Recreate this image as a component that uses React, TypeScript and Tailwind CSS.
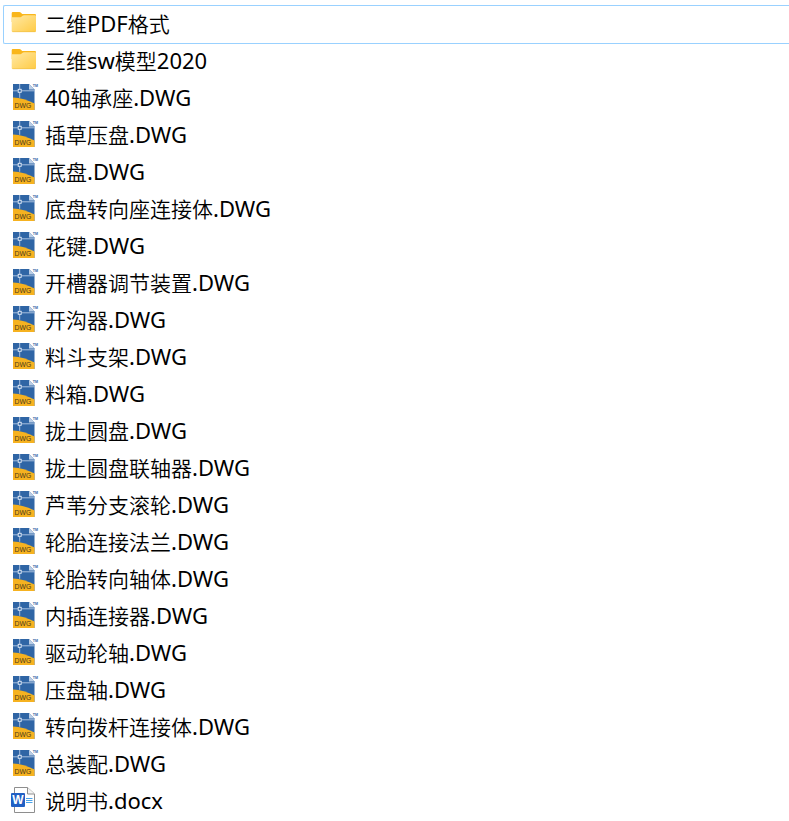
import React from 'react';

type FileKind = 'folder' | 'dwg' | 'docx';

interface FileItem {
    name: string;
    kind: FileKind;
    selected?: boolean;
}

const files: FileItem[] = [
    { name: '二维PDF格式', kind: 'folder', selected: true },
    { name: '三维sw模型2020', kind: 'folder' },
    { name: '40轴承座.DWG', kind: 'dwg' },
    { name: '插草压盘.DWG', kind: 'dwg' },
    { name: '底盘.DWG', kind: 'dwg' },
    { name: '底盘转向座连接体.DWG', kind: 'dwg' },
    { name: '花键.DWG', kind: 'dwg' },
    { name: '开槽器调节装置.DWG', kind: 'dwg' },
    { name: '开沟器.DWG', kind: 'dwg' },
    { name: '料斗支架.DWG', kind: 'dwg' },
    { name: '料箱.DWG', kind: 'dwg' },
    { name: '拢土圆盘.DWG', kind: 'dwg' },
    { name: '拢土圆盘联轴器.DWG', kind: 'dwg' },
    { name: '芦苇分支滚轮.DWG', kind: 'dwg' },
    { name: '轮胎连接法兰.DWG', kind: 'dwg' },
    { name: '轮胎转向轴体.DWG', kind: 'dwg' },
    { name: '内插连接器.DWG', kind: 'dwg' },
    { name: '驱动轮轴.DWG', kind: 'dwg' },
    { name: '压盘轴.DWG', kind: 'dwg' },
    { name: '转向拨杆连接体.DWG', kind: 'dwg' },
    { name: '总装配.DWG', kind: 'dwg' },
    { name: '说明书.docx', kind: 'docx' },
];

const iconClass = 'w-[28px] h-[29px] shrink-0';

const FolderIcon: React.FC = () => (
    <svg className={iconClass} viewBox="0 0 28 29" aria-hidden="true">
        <defs>
            <linearGradient id="folder-front" x1="0" y1="0" x2="1" y2="1">
                <stop offset="0" stopColor="#ffe9a6" />
                <stop offset="1" stopColor="#ffcb45" />
            </linearGradient>
        </defs>
        <path d="M0.7 3.2Q0.7 2 1.9 2H8.3Q9.1 2 9.7 2.6L11.2 4H24Q25 4 25 5V12H0.7Z" fill="#f9b61c" />
        <path d="M0.7 7.2H9.3Q10.1 7.2 10.7 6.6L11.6 5.8Q12.2 5.2 13 5.2H24Q25 5.2 25 6.2V21Q25 22 24 22H1.7Q0.7 22 0.7 21Z" fill="url(#folder-front)" />
        <path d="M1.4 21.7H24.4" stroke="#efbd43" strokeWidth="0.6" />
    </svg>
);

const DwgIcon: React.FC = () => (
    <svg className={iconClass} viewBox="0 0 28 29" aria-hidden="true">
        <path d="M2 0H18L23.5 5.5V26H2Z" fill="#2f65a5" />
        <path d="M18 0L23.5 5.5H18Z" fill="#b9cde6" />
        <path d="M2 13.5C9 13.8 17 16 23.5 19.6V26H2Z" fill="#f6b220" />
        <path d="M8.7 0V5M8.7 8.5V13.8M2 6.8H7M10.5 6.8H23.5" stroke="#b5cbe5" strokeWidth="0.9" />
        <rect x="7.2" y="5.3" width="3" height="3" fill="#2f65a5" stroke="#e8f0fa" strokeWidth="0.9" />
        <text x="3.6" y="24.1" fontSize="6.8" fontFamily="Liberation Sans, sans-serif" fill="#4a3a1a">DWG</text>
        <text x="21.8" y="2.6" fontSize="3.6" fontWeight="700" fontFamily="Liberation Sans, sans-serif" fill="#2f65a5">TM</text>
    </svg>
);

const WordIcon: React.FC = () => (
    <svg className={iconClass} viewBox="0 0 28 29" aria-hidden="true">
        <path d="M3.5 0.5H16.5L23.5 7V25.5H3.5Z" fill="#fff" stroke="#8e8e8e" />
        <path d="M16.5 0.5V7H23.5" fill="#f4f4f4" stroke="#8e8e8e" />
        <path d="M15 11.5H21.5M15 13.5H21.5M15 15.5H21.5" stroke="#4ba3ea" />
        <rect x="0" y="6" width="14" height="14" rx="1" fill="#2160c4" />
        <text x="7" y="17.2" fontSize="12" fontWeight="700" textAnchor="middle" fontFamily="Liberation Sans, sans-serif" fill="#fff">W</text>
    </svg>
);

const FileIcon: React.FC<{ kind: FileKind }> = ({ kind }) => {
    if (kind === 'folder') return <FolderIcon />;
    if (kind === 'docx') return <WordIcon />;
    return <DwgIcon />;
};

// Latin runs get a regular weight, Chinese runs keep the light one of the list
const FileName: React.FC<{ name: string }> = ({ name }) => (
    <span className="pb-0.5 whitespace-nowrap">
        {name.split(/([\w.]+)/).map((part, i) =>
            i % 2 === 1 ? <span key={i} className="text-[22px] leading-7 font-normal">{part}</span> : part
        )}
    </span>
);

export default function App() {
    return (
        <main className="min-h-screen bg-white pt-1.5 pl-[3px] font-['Noto_Sans','Noto_Sans_CJK_SC',sans-serif] text-[21px] leading-7 font-[350] text-black">
            <ul>
                {files.map((file) => (
                    <li
                        key={file.name}
                        className={`flex items-center gap-1.5 border-l pl-[7px] ${
                            file.selected ? '-my-px h-[39px] rounded-l-xs border-y border-[#99d1ff]' : 'h-[37px] border-transparent'
                        }`}
                    >
                        <FileIcon kind={file.kind} />
                        <FileName name={file.name} />
                    </li>
                ))}
            </ul>
        </main>
    );
}
